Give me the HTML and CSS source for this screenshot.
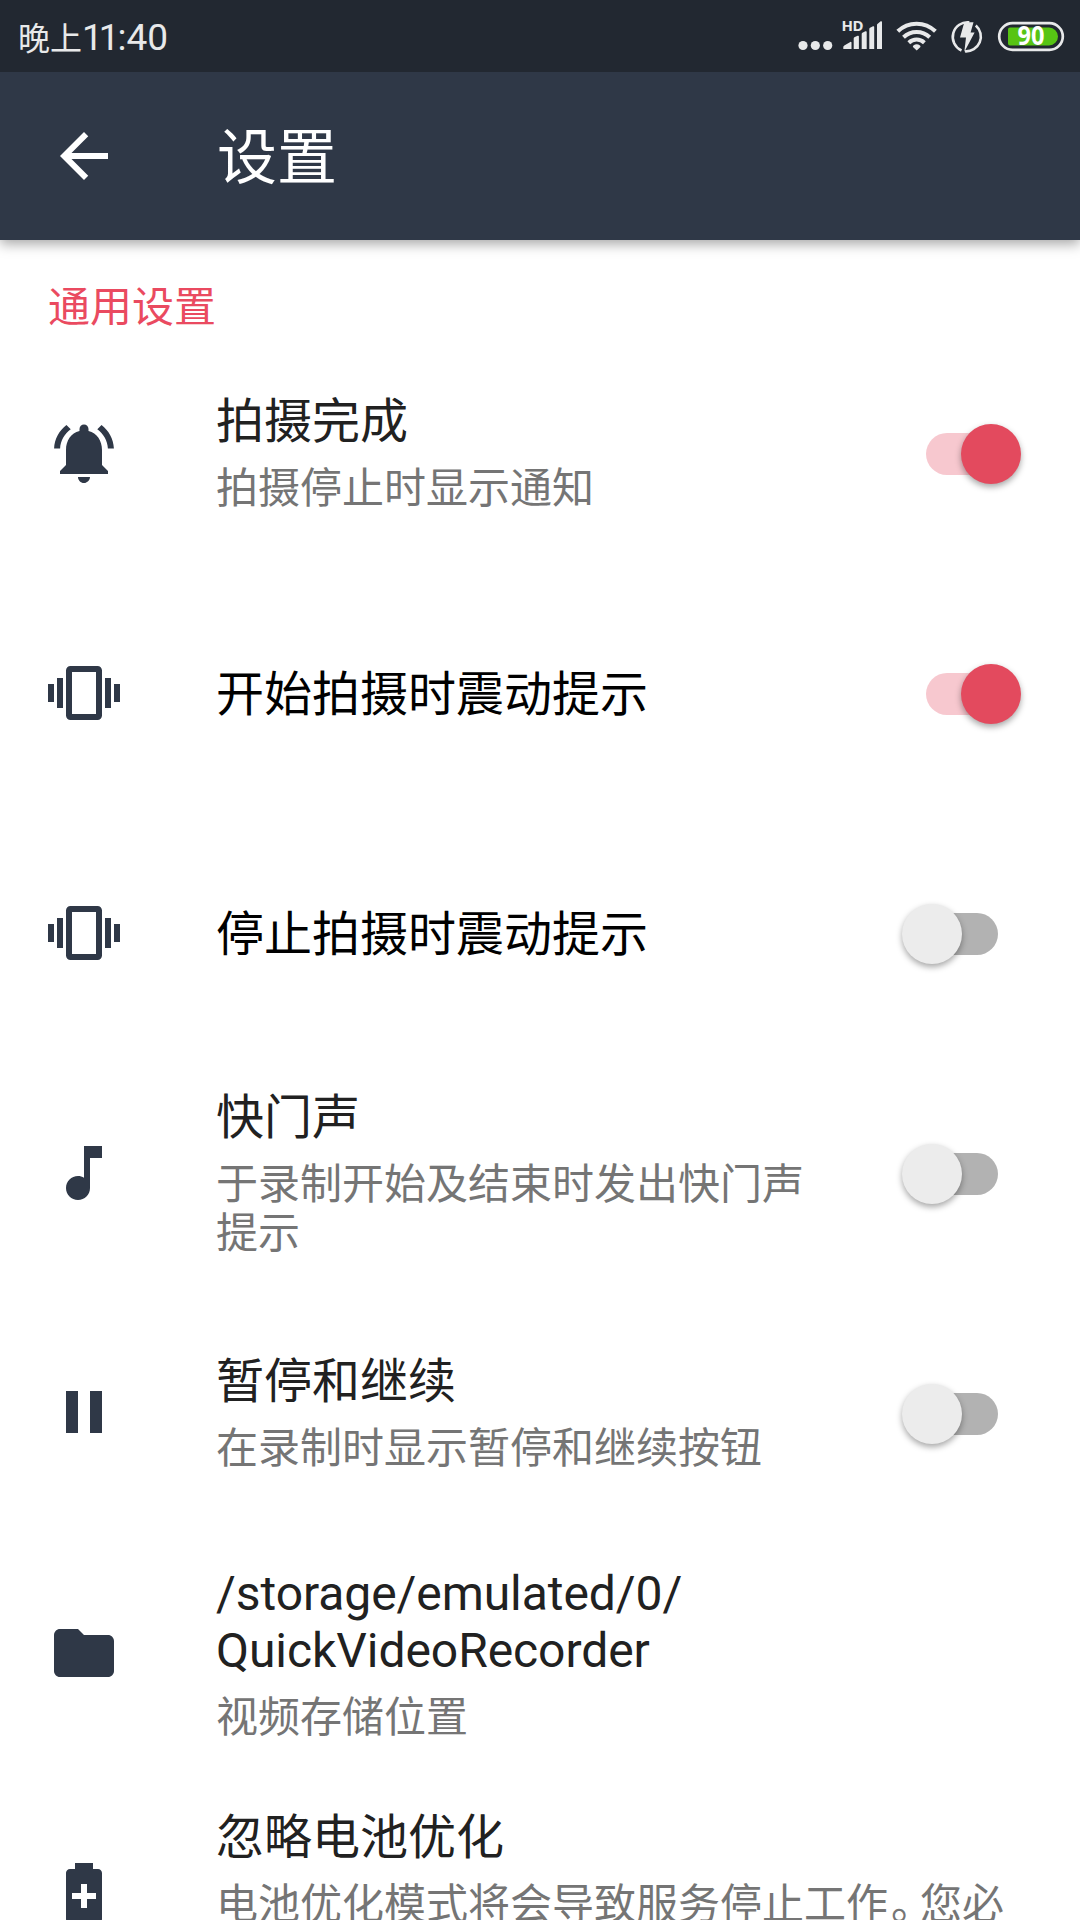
FILE: index.html
```html
<!DOCTYPE html>
<html lang="zh-CN">
<head>
<meta charset="utf-8">
<title>设置</title>
<link rel="stylesheet" href="styles.css">
</head>
<body>
<header class="top">
  <div class="status">
    <div class="clock"><span class="clock-day">晚上</span><span class="clock-ones">11</span><span class="clock-colon">:</span><span class="clock-min">40</span></div>
    <svg class="status-icons" width="300" height="72" viewBox="780 0 300 72">
      <g fill="#e8e9ea">
        <circle cx="803" cy="45.5" r="4.6"/><circle cx="815.3" cy="45.5" r="4.6"/><circle cx="827.7" cy="45.5" r="4.6"/>
        <text class="hd" x="841.4" y="31" textLength="22">HD</text>
        <path d="M843.3 49v-2q0-1 1-1.500l6-3.500q1.200-.5 1.200.8V49zM853.700 49V38.500q0-.8.7-1.200l3.200-1.500q1.300-.5 1.300.8V49zM861.700 49V34q0-.8.7-1.200l3-1.500q1.300-.5 1.300.8V49zM869.300 49V29q0-.8.7-1.200l3-1.500q1.200-.5 1.200.8V49zM877 49V25q0-.8.7-1.200l3-2.500q1.300-.5 1.300.8V49z"/>
        <path d="M916.700 50.600l-3.500-3.400q-.8-.9.200-1.600a5.200 5.200 0 0 1 6.600 0q1 .7.200 1.600z"/>
        <path d="M964.300 22.200h9.200l-2.900 10.300h4l-10.300 19.500 1.700-14.500h-6z"/>
      </g>
      <g fill="none" stroke="#e8e9ea">
        <path stroke-width="4" d="M897.800 31.300a27 27 0 0 1 37.600 0M903.500 37.200a18.800 18.800 0 0 1 26.200 0M908.800 42.700a11.300 11.300 0 0 1 15.600 0"/>
        <path stroke-width="2.600" d="M969.300 22.300A14.800 14.800 0 0 0 961.500 50.500M975.800 25.400A14.800 14.800 0 0 1 965 51.300"/>
        <rect x="999.200" y="23.200" width="63.600" height="26.600" rx="13.300" stroke-width="2.700"/>
      </g>
      <path fill="#57c414" d="M1010 27.500h39a9 9 0 0 1 0 18h-39q-2 0-2-2v-14q0-2 2-2z"/>
      <text class="level" x="1017.500" y="45" textLength="27" lengthAdjust="spacingAndGlyphs">90</text>
    </svg>
  </div>
  <div class="toolbar">
    <svg class="icon back" viewBox="0 0 24 24"><path d="M20 11H7.830l5.590-5.590L12 4l-8 8 8 8 1.410-1.410L7.830 13H20v-2z"/></svg>
    <h1 class="heading">设置</h1>
  </div>
</header>
<main class="list">
  <h2 class="category">通用设置</h2>
  <section class="row">
    <svg class="icon" viewBox="0 0 24 24"><path d="M7.580 4.080L6.150 2.650C3.750 4.480 2.170 7.300 2.030 10.500h2c.15-2.650 1.510-4.970 3.550-6.420zm12.390 6.420h2c-.15-3.200-1.730-6.020-4.120-7.850l-1.420 1.430c2.020 1.450 3.390 3.770 3.540 6.420zM18 11c0-3.070-1.640-5.640-4.500-6.320V4c0-.83-.67-1.500-1.500-1.500s-1.500.67-1.500 1.500v.68C7.630 5.360 6 7.920 6 11v5l-2 2v1h16v-1l-2-2v-5zm-6 11c.14 0 .27-.01.4-.04.65-.14 1.180-.58 1.440-1.180.1-.24.15-.5.15-.78h-4c.01 1.100.9 2 2.010 2z"/></svg>
    <div class="text"><p class="title">拍摄完成</p><p class="summary">拍摄停止时显示通知</p></div>
    <div class="switch on"><span class="thumb"></span></div>
  </section>
  <section class="row">
    <svg class="icon" viewBox="0 0 24 24"><path d="M0 15h2V9H0v6zm3 2h2V7H3v10zm19-8v6h2V9h-2zm-3 8h2V7h-2v10zM16.500 3h-9C6.670 3 6 3.670 6 4.500v15c0 .83.67 1.500 1.500 1.500h9c.83 0 1.500-.67 1.500-1.500v-15c0-.83-.67-1.500-1.500-1.500zM16 19H8V5h8v14z"/></svg>
    <div class="text"><p class="title strong">开始拍摄时震动提示</p></div>
    <div class="switch on"><span class="thumb"></span></div>
  </section>
  <section class="row">
    <svg class="icon" viewBox="0 0 24 24"><path d="M0 15h2V9H0v6zm3 2h2V7H3v10zm19-8v6h2V9h-2zm-3 8h2V7h-2v10zM16.500 3h-9C6.670 3 6 3.670 6 4.500v15c0 .83.67 1.500 1.500 1.500h9c.83 0 1.500-.67 1.500-1.500v-15c0-.83-.67-1.500-1.500-1.500zM16 19H8V5h8v14z"/></svg>
    <div class="text"><p class="title strong">停止拍摄时震动提示</p></div>
    <div class="switch"><span class="thumb"></span></div>
  </section>
  <section class="row">
    <svg class="icon" viewBox="0 0 24 24"><path d="M12 3v10.550c-.59-.34-1.270-.55-2-.55-2.210 0-4 1.790-4 4s1.790 4 4 4 4-1.790 4-4V7h4V3h-6z"/></svg>
    <div class="text"><p class="title">快门声</p><p class="summary">于录制开始及结束时发出快门声提示</p></div>
    <div class="switch"><span class="thumb"></span></div>
  </section>
  <section class="row">
    <svg class="icon" viewBox="0 0 24 24"><path d="M6 18.667h4v-14H6v14zm8-14v14h4v-14h-4z"/></svg>
    <div class="text"><p class="title">暂停和继续</p><p class="summary">在录制时显示暂停和继续按钮</p></div>
    <div class="switch"><span class="thumb"></span></div>
  </section>
  <section class="row">
    <svg class="icon" viewBox="0 0 24 24"><path d="M10 4H4c-1.100 0-1.990.9-1.990 2L2 18c0 1.100.9 2 2 2h16c1.100 0 2-.9 2-2V8c0-1.100-.9-2-2-2h-8l-2-2z"/></svg>
    <div class="text"><p class="title path">/storage/emulated/0/<br>QuickVideoRecorder</p><p class="summary">视频存储位置</p></div>
  </section>
  <section class="row">
    <svg class="icon" viewBox="0 0 24 24"><path d="M16.670 4H15V2H9v2H7.330C6.600 4 6 4.600 6 5.330v15.330C6 21.400 6.600 22 7.330 22h9.330c.74 0 1.340-.6 1.340-1.330V5.330C18 4.600 17.400 4 16.670 4zM16 14h-3v3h-2v-3H8v-2h3V9h2v3h3v2z"/></svg>
    <div class="text wide"><p class="title">忽略电池优化</p><p class="summary two-line">电池优化模式将会导致服务停止工作<span class="stop">。</span>您必</p></div>
  </section>
</main>
</body>
</html>
```
FILE: styles.css
```css
* { box-sizing: border-box; }
body {
  margin: 0;
  width: 1080px;
  height: 1920px;
  overflow: hidden;
  background: #fff;
  font-family: Roboto, "Noto Sans CJK SC", sans-serif;
}
h1, h2, p { margin: 0; font-weight: 400; }
.top {
  height: 240px;
  background: #2f3847;
  box-shadow: 0 4px 12px rgba(0, 0, 0, .35);
}
.status {
  height: 72px;
  background: #222831;
  display: flex;
  justify-content: space-between;
}
.clock {
  padding-left: 18px;
  display: flex;
  align-items: baseline;
  height: 72px;
  line-height: 76px;
  color: #e8e9ea;
  font-size: 37px;
}
.clock-day { font-size: 32px; }
.clock-ones { letter-spacing: -4px; }
.clock-colon { margin-left: 2px; }
.hd { font: 700 15px "Noto Sans", sans-serif; }
.level { font: 700 26px "Noto Sans", sans-serif; fill: #fff; }
.toolbar {
  height: 168px;
  padding-left: 48px;
  display: flex;
  align-items: center;
}
.icon {
  flex: none;
  width: 72px;
  height: 72px;
  fill: #2f3847;
}
.back { fill: #fff; }
.heading {
  margin-left: 97px;
  padding-top: 5px;
  font-size: 60px;
  line-height: 84px;
  color: #fff;
}
.category {
  height: 93px;
  padding: 40px 48px 0;
  font-size: 42px;
  line-height: 56px;
  color: #ea4a60;
}
.row {
  height: 240px;
  padding-left: 48px;
  display: flex;
  align-items: center;
}
.text {
  width: 610px;
  margin-left: 96px;
}
.text.wide { width: 816px; }
.title {
  font-size: 48px;
  line-height: 57px;
  color: #212121;
}
.title.strong { padding-top: 2px; color: #000; }
.path { letter-spacing: -.06px; }
.summary {
  margin-top: 14px;
  font-size: 42px;
  line-height: 49px;
  color: #757575;
}
.two-line { min-height: 98px; }
.stop { margin-left: 3px; letter-spacing: -13px; }
.switch {
  width: 72px;
  height: 42px;
  margin: 2px 0 0 100px;
  border-radius: 21px;
  background: #b2b2b2;
  display: flex;
  align-items: center;
}
.thumb {
  flex: none;
  width: 60px;
  height: 60px;
  margin: -1px 0 0 -24px;
  border-radius: 50%;
  background: #ececec;
  box-shadow: 0 3px 6px rgba(0, 0, 0, .35);
}
.on { background: #f7c8cf; }
.on .thumb {
  margin-left: 35px;
  background: #e34a5e;
}
```
